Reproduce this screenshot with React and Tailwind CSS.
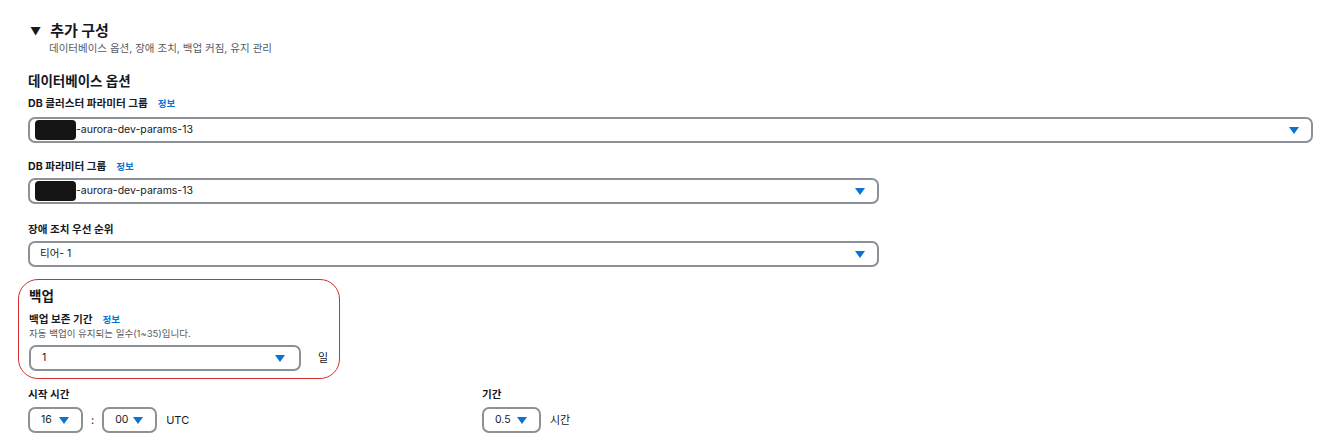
import React from 'react';

const font = { fontFamily: 'Inter, "Noto Sans CJK KR", sans-serif' };

function Caret() {
  return (
    <svg width="10" height="7" viewBox="0 0 10 7" className="shrink-0">
      <path d="M0 0 H10 L5 7 Z" fill="#0972d3" />
    </svg>
  );
}

function Select({ children, className }) {
  return (
    <div className={`h-[26px] border-2 border-[#8d9096] rounded-[7px] bg-white flex items-center justify-between pl-[5px] pr-[12px] text-[10.5px] text-[#16191f] ${className}`}>
      <div className="flex items-center">{children}</div>
      <Caret />
    </div>
  );
}

function Redacted() {
  return <span className="inline-block w-[41px] h-[20px] rounded-[4px] bg-[#141414]" />;
}

function Info() {
  return <span className="ml-[10px] text-[9.5px] font-bold text-[#0972d3]">정보</span>;
}

export default function App() {
  return (
    <div style={font} className="w-[1338px] h-[446px] bg-white text-[#16191f] relative overflow-hidden">
      <div className="pl-[28px] pt-[21px]">
        {/* 헤더 */}
        <div className="flex items-center h-[20px]">
          <span className="text-[11px] mr-[9px] ml-[2px]">▼</span>
          <span className="text-[15px] font-bold leading-[20px]">추가 구성</span>
        </div>
        <div className="pl-[21px] text-[10.5px] text-[#545b64] leading-[14px] mt-[1px]">데이터베이스 옵션, 장애 조치, 백업 커짐, 유지 관리</div>

        <div className="text-[13.5px] font-bold mt-[16px] leading-[18px]">데이터베이스 옵션</div>

        <div className="flex items-center text-[10.6px] font-bold mt-[7px] h-[14px]">DB 클러스터 파라미터 그룹<Info /></div>
        <Select className="w-[1285px] mt-[6px]">
          <Redacted />
          <span>-aurora-dev-params-13</span>
        </Select>

        <div className="flex items-center text-[10.6px] font-bold mt-[17px] h-[14px]">DB 파라미터 그룹<Info /></div>
        <Select className="w-[851px] mt-[4px]">
          <Redacted />
          <span>-aurora-dev-params-13</span>
        </Select>

        <div className="flex items-center text-[10.6px] font-bold mt-[19px] h-[14px]">장애 조치 우선 순위</div>
        <Select className="w-[851px] mt-[4px]">
          <span className="pl-[5px]">티어- 1</span>
        </Select>

        {/* 백업 */}
        <div className="mt-[12px] -ml-[10px] w-[322px] h-[100px] border border-[#d32f2f] rounded-[20px] pl-[10px] pt-[7px]">
          <div className="text-[13.5px] font-bold leading-[18px]">백업</div>
          <div className="flex items-center text-[10.6px] font-bold mt-[8px] h-[14px]">백업 보존 기간<Info /></div>
          <div className="text-[9.5px] text-[#545b64] leading-[12px] mt-[1px]">자동 백업이 유지되는 일수(1~35)입니다.</div>
          <div className="flex items-center mt-[5px]">
            <Select className="w-[272px] pr-[14px]">
              <span className="pl-[6px]">1</span>
            </Select>
            <span className="ml-[17px] text-[11px]">일</span>
          </div>
        </div>

        <div className="flex mt-[9px]">
          <div className="w-[454px]">
            <div className="flex items-center text-[10.6px] font-bold h-[14px]">시작 시간</div>
            <div className="flex items-center mt-[5px]">
              <Select className="w-[55px] pr-[8px]">
                <span className="pl-[6px]">16</span>
              </Select>
              <span className="mx-[8px] text-[11px]">:</span>
              <Select className="w-[55px] pr-[8px]">
                <span className="pl-[6px]">00</span>
              </Select>
              <span className="ml-[9px] text-[11px]">UTC</span>
            </div>
          </div>
          <div>
            <div className="flex items-center text-[10.6px] font-bold h-[14px]">기간</div>
            <div className="flex items-center mt-[5px]">
              <Select className="w-[59px] pr-[9px]">
                <span className="pl-[6px]">0.5</span>
              </Select>
              <span className="ml-[9px] text-[11px]">시간</span>
            </div>
          </div>
        </div>
      </div>
    </div>
  );
}
